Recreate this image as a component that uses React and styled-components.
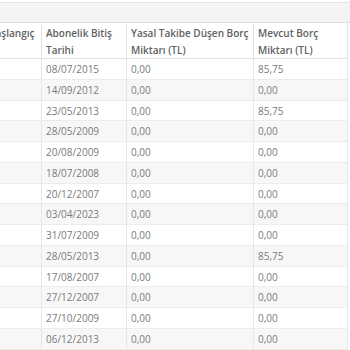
import React from "react";
import styled, { createGlobalStyle } from "styled-components";

const Global = createGlobalStyle`
  html, body { margin: 0; padding: 0; background: #fff; }
  body { font-family: "Open Sans", "Liberation Sans", sans-serif; }
`;

const Viewport = styled.div`
  width: 350px;
  height: 350px;
  overflow: hidden;
  padding-top: 2px;
  box-sizing: border-box;
`;

const TopBar = styled.div`
  height: 19px;
  background: #f4f4f4;
  border-top: 1px solid #e6e6e6;
  border-bottom: 1px solid #dedede;
`;

const Grid = styled.div`
  display: grid;
  grid-template-columns: 102px 85px 127px 94px;
  margin-left: -60px;
  width: max-content;
`;

const HeadCell = styled.div`
  height: 36px;
  box-sizing: border-box;
  padding: 2px 4px 0 4px;
  font-size: 10px;
  line-height: 17px;
  font-weight: 600;
  color: #616161;
  border-right: 1px solid #e2e2e2;
  border-bottom: 1px solid #e2e2e2;
  overflow: hidden;
`;

const Cell = styled.div`
  height: 20.75px;
  box-sizing: border-box;
  padding: 0 4px;
  font-size: 10px;
  line-height: 20px;
  color: #7a7a7a;
  background: ${(p) => (p.$striped ? "#f7f7f7" : "#ffffff")};
  border-right: 1px solid #e6e6e6;
  border-bottom: 1px solid #ececec;
  white-space: nowrap;
  overflow: hidden;
`;

const headers = [
  "Abonelik Başlangıç Tarihi",
  "Abonelik Bitiş Tarihi",
  "Yasal Takibe Düşen Borç Miktarı (TL)",
  "Mevcut Borç Miktarı (TL)",
];

const rows = [
  ["08/07/2015", "0,00", "85,75"],
  ["14/09/2012", "0,00", "0,00"],
  ["23/05/2013", "0,00", "85,75"],
  ["28/05/2009", "0,00", "0,00"],
  ["20/08/2009", "0,00", "0,00"],
  ["18/07/2008", "0,00", "0,00"],
  ["20/12/2007", "0,00", "0,00"],
  ["03/04/2023", "0,00", "0,00"],
  ["31/07/2009", "0,00", "0,00"],
  ["28/05/2013", "0,00", "85,75"],
  ["17/08/2007", "0,00", "0,00"],
  ["27/12/2007", "0,00", "0,00"],
  ["27/10/2009", "0,00", "0,00"],
  ["06/12/2013", "0,00", "0,00"],
];

export default function App() {
  return (
    <>
      <Global />
      <Viewport>
        <TopBar />
        <Grid>
          {headers.map((h) => (
            <HeadCell key={h}>{h}</HeadCell>
          ))}
          {rows.map((r, i) => (
            <React.Fragment key={i}>
              <Cell $striped={i % 2 === 1}></Cell>
              {r.map((v, j) => (
                <Cell key={j} $striped={i % 2 === 1}>
                  {v}
                </Cell>
              ))}
            </React.Fragment>
          ))}
        </Grid>
      </Viewport>
    </>
  );
}
